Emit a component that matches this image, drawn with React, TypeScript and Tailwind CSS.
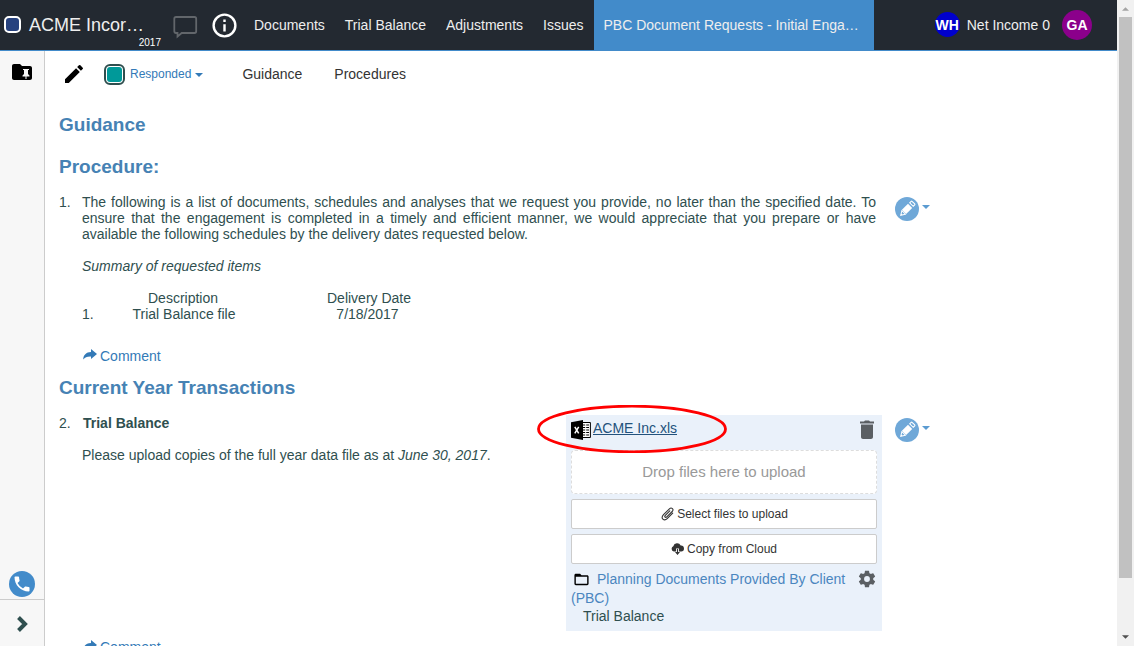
import type { ReactNode } from "react";

function Icon({ d, className, viewBox = "0 0 24 24" }: { d: string; className: string; viewBox?: string }) {
  return (
    <svg viewBox={viewBox} className={className} fill="currentColor" aria-hidden="true">
      <path fillRule="evenodd" d={d} />
    </svg>
  );
}

const PENCIL = "M3 17.25V21h3.75L17.81 9.94l-3.75-3.75L3 17.25zM20.71 7.04a1 1 0 0 0 0-1.41l-2.34-2.34a1 1 0 0 0-1.41 0l-1.83 1.83 3.75 3.75 1.83-1.83z";
const INFO = "M11 17h2v-6h-2v6zm1-15a10 10 0 1 0 0 20 10 10 0 0 0 0-20zm0 18a8 8 0 1 1 0-16 8 8 0 0 1 0 16zM11 9h2V7h-2v2z";
const TRASH = "M6 19c0 1.1.9 2 2 2h8c1.1 0 2-.9 2-2V6.500H6V19zM19 3.500h-4l-1-1h-4l-1 1H5v2h14v-2z";
const GEAR = "M19.43 12.98c.04-.32.07-.64.07-.98s-.03-.66-.07-.98l2.11-1.65c.19-.15.24-.42.12-.64l-2-3.46c-.12-.22-.39-.3-.61-.22l-2.49 1c-.52-.4-1.08-.73-1.69-.98l-.38-2.65A.49.49 0 0 0 14 2h-4c-.25 0-.46.18-.49.42l-.38 2.65c-.61.25-1.17.59-1.69.98l-2.49-1c-.23-.09-.49 0-.61.22l-2 3.46c-.13.22-.07.49.12.64l2.11 1.65c-.04.32-.07.65-.07.98s.03.66.07.98l-2.11 1.65c-.19.15-.24.42-.12.64l2 3.46c.12.22.39.3.61.22l2.49-1c.52.4 1.08.73 1.69.98l.38 2.65c.03.24.24.42.49.42h4c.25 0 .46-.18.49-.42l.38-2.65c.61-.25 1.17-.59 1.69-.98l2.49 1c.23.09.49 0 .61-.22l2-3.46c.12-.22.07-.49-.12-.64l-2.11-1.65zM12 15.5a3.5 3.5 0 1 1 0-7 3.5 3.5 0 0 1 0 7z";
const FOLDER_OPEN = "M20 6h-8l-2-2H4c-1.1 0-2 .9-2 2v12c0 1.1.9 2 2 2h16c1.1 0 2-.9 2-2V8c0-1.1-.9-2-2-2zm0 12H4V8h16v10z";
const FOLDER_PIN = "M20 6h-8l-2-2H4c-1.1 0-2 .9-2 2v12c0 1.1.9 2 2 2h16c1.1 0 2-.9 2-2V8c0-1.1-.9-2-2-2zM13 9h6v1h-1v4l1.5 1.5V16.500H16.500V19h-1v-2.500H12.500V15.500L14 14v-4h-1V9z";
const PHONE = "M6.62 10.79a15.15 15.15 0 0 0 6.59 6.59l2.2-2.2c.27-.27.67-.36 1.02-.24 1.12.37 2.33.57 3.57.57.55 0 1 .45 1 1V20c0 .55-.45 1-1 1C10.610 21 3 13.390 3 4c0-.55.45-1 1-1h3.500c.55 0 1 .45 1 1 0 1.250.2 2.450.57 3.570.11.35.03.74-.25 1.020l-2.200 2.200z";
const SHARE = "M8 0l6 5-6 5V7.400C4 7.200 2 8.500 .2 10.500c0-4.500 3-7.300 7.800-7.500V0z";

function Caret({ className }: { className: string }) {
  return (
    <svg viewBox="0 0 8 4" className={className} fill="currentColor" aria-hidden="true">
      <path d="M0 0h8L4 4z" />
    </svg>
  );
}

function EditMenu() {
  return (
    <div className="flex shrink-0 items-start">
      <span className="flex size-6 items-center justify-center rounded-full bg-[#6fa8d8] text-white">
        <svg viewBox="0 0 24 24" className="size-6" aria-hidden="true">
          <g transform="rotate(45 12 12)" fill="none" stroke="white">
            <path d="M9 7.600h6v8.600H9z" fill="white" stroke="none" />
            <path d="M9.500 5.700V3.600q0-.6.6-.6h3.800q.6 0 .6.600v2.100z" strokeWidth="1.100" />
            <path d="M9.500 16.800h5L12 20.800z" strokeWidth="1" />
            <path d="M11.200 19.300h1.600L12 21.300z" fill="white" stroke="none" />
          </g>
        </svg>
      </span>
      <Caret className="mt-2 ml-[3px] h-1 w-2 text-[#5b9bd1]" />
    </div>
  );
}

function CommentLink({ className }: { className: string }) {
  return (
    <a className={`flex h-4 items-center text-[#337ab7] ${className}`}>
      <Icon d={SHARE} viewBox="0 0 14 11" className="mr-[3px] -mt-[3px] h-[11px] w-[14px]" />
      Comment
    </a>
  );
}

function Heading({ children, className }: { children: ReactNode; className: string }) {
  return <h2 className={`pl-[14px] text-[19px] leading-6 font-bold text-[#4682b4] ${className}`}>{children}</h2>;
}

function Header() {
  return (
    <header className="flex h-[51px] shrink-0 items-stretch border-b border-[#428bca] bg-[#232931] text-[#eee]">
      <div className="flex w-[161px] flex-col pl-1">
        <div className="flex h-[37px] items-end">
          <span className="mb-1 size-[17px] shrink-0 rounded-[5px] border-2 border-white bg-[#27427f]" />
          <span className="ml-2 text-[18px] leading-6 whitespace-nowrap">ACME Incor…</span>
        </div>
        <span className="text-right text-[10px] leading-[11px] text-white">2017</span>
      </div>
      <div className="flex w-[93px] items-center">
        <svg viewBox="0 0 26 24" className="mt-1 ml-[11px] h-6 w-[26px]" fill="none" stroke="#62666b" strokeWidth="1.800" aria-hidden="true">
          <path d="M4 2h18.500q1.700 0 1.700 1.700v12.600q0 1.700-1.700 1.700H9.700l-4.200 3.500V18H4q-1.700 0-1.700-1.700V3.700Q2.300 2 4 2z" />
        </svg>
        <Icon d={INFO} className="ml-3 size-[29px] text-white" />
      </div>
      <nav className="flex items-center gap-5 whitespace-nowrap">
        <span>Documents</span>
        <span>Trial Balance</span>
        <span>Adjustments</span>
        <span>Issues</span>
      </nav>
      <div className="ml-[10px] flex w-[280px] items-center bg-[#428bca] pl-[10px] whitespace-nowrap">
        PBC Document Requests - Initial Enga…
      </div>
      <div className="flex flex-1 items-center justify-end pr-[25px]">
        <span className="mb-px flex size-[25px] items-center justify-center rounded-full bg-[#0000cd] font-bold text-white">WH</span>
        <span className="ml-[7px]">Net Income 0</span>
        <span className="ml-3 flex size-[30px] items-center justify-center rounded-full bg-[#8b008b] font-bold text-white">GA</span>
      </div>
    </header>
  );
}

function Sidebar() {
  return (
    <aside className="flex w-[45px] shrink-0 flex-col items-center border-r border-[#ccc] bg-[#f7f7f7]">
      <Icon d={FOLDER_PIN} className="mt-[9px] size-6 text-black" />
      <span className="mt-auto flex size-[26px] items-center justify-center rounded-full bg-[#428bca] text-white">
        <Icon d={PHONE} className="size-5" />
      </span>
      <div className="mt-[2px] flex h-[47px] w-full items-center justify-center border-t border-[#ccc] pt-[2px] pl-px">
        <svg viewBox="0 0 12 16" className="size-4 text-[#2f4f4f]" fill="none" stroke="currentColor" strokeWidth="4" aria-hidden="true">
          <path d="M1.500 1.500L8 8l-6.500 6.500" />
        </svg>
      </div>
    </aside>
  );
}

function UploadPanel() {
  return (
    <section className="relative flex h-[216px] w-[316px] shrink-0 flex-col bg-[#eaf1fa] px-[5px]">
      <svg viewBox="0 0 190 48" className="absolute -top-[10px] -left-[29px] h-12 w-[190px]" aria-hidden="true">
        <ellipse cx="95" cy="24" rx="93.500" ry="22.800" fill="none" stroke="#f00" strokeWidth="2.800" />
      </svg>
      <div className="flex h-[35px] items-start">
        <svg viewBox="0 0 20 20" className="mt-[5px] size-5 shrink-0" aria-hidden="true">
          <path d="M0 2.300L12 0v20L0 17.700z" />
          <path d="M3.800 6.800l3.900 6.600M7.700 6.800l-3.900 6.600" stroke="white" strokeWidth="1.500" />
          <path d="M12 2.500h7.400v15H12" fill="white" stroke="black" />
          <path d="M12 5h2.200m1 0h2.800M12 7.500h2.200m1 0h2.800M12 10h2.200m1 0h2.800M12 12.500h2.200m1 0h2.800M12 15h2.200m1 0h2.800" stroke="black" strokeWidth="1" />
        </svg>
        <a className="mt-[5px] ml-[2px] leading-4 text-[#23527c] underline">ACME Inc.xls</a>
        <Icon d={TRASH} className="mt-[3px] -mr-[2px] ml-auto size-6 text-[#5b5f63]" />
      </div>
      <div className="flex h-11 items-center justify-center rounded border border-dashed border-[#ddd] bg-white text-[15px] text-[#999]">
        Drop files here to upload
      </div>
      <button className="mt-[5px] flex h-[30px] items-center justify-center rounded-xs border border-[#ccc] bg-white text-xs text-[#333]">
        <svg viewBox="0 0 14 14" className="mr-[2px] h-[14px] w-[15px]" fill="none" stroke="currentColor" strokeWidth="1.100" strokeLinecap="round" aria-hidden="true">
          <path d="M9.300 3.800L4.800 8.300c-1.300 1.400.2 2.800 1.500 1.500l5.400-5.300c2.300-2.300-.8-4.600-2.800-2.700L3 7.600c-3.600 3.700.7 7 3.700 4.100l5.500-5.500" />
        </svg>
        Select files to upload
      </button>
      <button className="mt-[5px] flex h-[30px] items-center justify-center rounded-xs border border-[#ccc] bg-white text-xs text-[#333]">
        <svg viewBox="0 0 13 12" className="mr-[3px] h-3 w-[13px]" aria-hidden="true">
          <path d="M2.800 8.500A2.800 2.800 0 0 1 2.300 3.200 4 4 0 0 1 9.700 2.500 3 3 0 0 1 10.200 8.500H8V5.500H5v3z" fill="currentColor" />
          <path d="M5.900 6h1.200v3H9L6.500 12 4 9h1.900z" fill="currentColor" />
        </svg>
        Copy from Cloud
      </button>
      <div className="mt-[6px] flex">
        <div className="flex-1 leading-[19px] text-[#4a86bf]">
          <Icon d={FOLDER_OPEN} className="mr-[7px] ml-[2px] inline size-[17px] align-[-4px] text-black" />
          <span>Planning Documents Provided By Client (PBC)</span>
        </div>
        <Icon d={GEAR} className="-mt-px size-5 shrink-0 text-[#5b5f63]" />
      </div>
      <div className="-mt-px pl-3 leading-[18px]">Trial Balance</div>
    </section>
  );
}

export default function App() {
  return (
    <div className="flex h-[646px] w-[1134px] overflow-hidden bg-white font-['Liberation_Sans',Arial,sans-serif] text-sm text-[#2f4f4f]">
      <div className="flex w-[1117px] flex-col">
        <Header />
        <div className="flex min-h-0 flex-1">
          <Sidebar />
          <main className="min-w-0 flex-1 overflow-hidden">
            <div className="flex h-[46px] items-center pl-[17px] text-[#333]">
              <Icon d={PENCIL} className="size-6 text-black" />
              <span className="ml-[18px] flex size-[21px] rounded-md border-2 border-[#2f4f4f] p-px">
                <span className="flex-1 rounded-[3px] bg-[#009999]" />
              </span>
              <span className="ml-[5px] text-xs text-[#337ab7]">Responded</span>
              <Caret className="mt-[2px] ml-1 h-1 w-2 text-[#337ab7]" />
              <span className="ml-[39px]">Guidance</span>
              <span className="ml-8">Procedures</span>
            </div>

            <Heading className="mt-4">Guidance</Heading>
            <Heading className="mt-[18px]">Procedure:</Heading>

            <div className="mt-[15px] flex pl-[14px] leading-4">
              <span className="w-[23px] shrink-0">1.</span>
              <div className="w-[794px] shrink-0">
                <p className="text-justify">
                  The following is a list of documents, schedules and analyses that we request you provide, no later than the
                  specified date. To ensure that the engagement is completed in a timely and efficient manner, we would
                  appreciate that you prepare or have available the following schedules by the delivery dates requested below.
                </p>
                <p className="mt-4 italic">Summary of requested items</p>
                <div className="mt-4 grid w-[380px] grid-cols-[10px_184px_184px] text-center">
                  <span />
                  <span className="pr-[2px]">Description</span>
                  <span className="pl-[2px]">Delivery Date</span>
                  <span className="text-left">1.</span>
                  <span>Trial Balance file</span>
                  <span className="pr-px">7/18/2017</span>
                </div>
                <CommentLink className="mt-[26px] pl-px" />
              </div>
              <div className="mt-[3px] ml-[19px]"><EditMenu /></div>
            </div>

            <Heading className="mt-3">Current Year Transactions</Heading>

            <div className="mt-[15px] flex pl-[14px] leading-4">
              <span className="w-[23px] shrink-0">2.</span>
              <div className="w-[484px] shrink-0">
                <p className="pl-px font-bold">Trial Balance</p>
                <p className="mt-4">
                  Please upload copies of the full year data file as at <em>June 30, 2017</em>.
                </p>
                <CommentLink className="mt-[176px] pl-px" />
              </div>
              <UploadPanel />
              <div className="mt-[3px] ml-[13px]"><EditMenu /></div>
            </div>
          </main>
        </div>
      </div>
      <div className="flex w-[17px] flex-col items-center bg-[#f1f1f1] py-[7px]">
        <Caret className="h-1 w-[7px] rotate-180 text-[#a3a3a3]" />
        <div className="mt-[6px] h-[561px] w-[13px] bg-[#c1c1c1]" />
        <Caret className="mt-auto h-1 w-[7px] text-[#505050]" />
      </div>
    </div>
  );
}
